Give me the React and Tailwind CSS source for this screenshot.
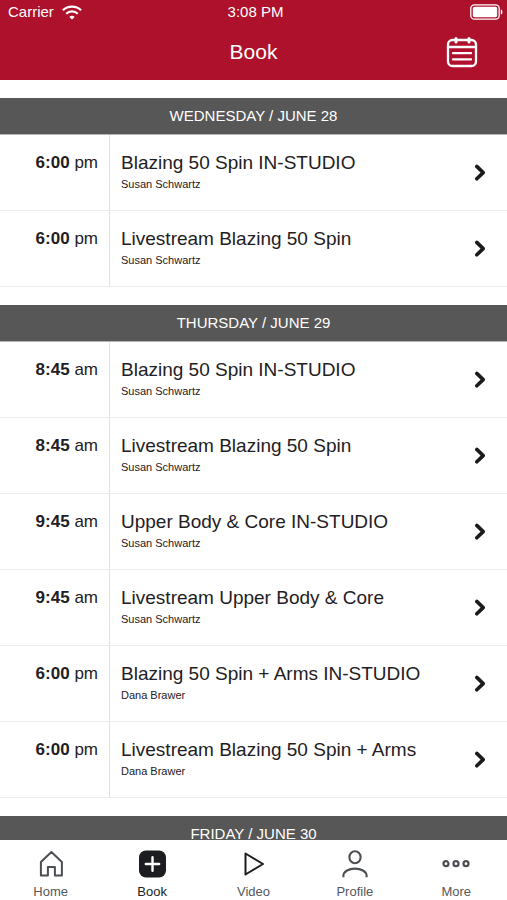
import React, { useState } from "react";

const schedule = [
  {
    day: "WEDNESDAY / JUNE 28",
    classes: [
      { time: "6:00", period: "pm", name: "Blazing 50 Spin IN-STUDIO", teacher: "Susan Schwartz" },
      { time: "6:00", period: "pm", name: "Livestream Blazing 50 Spin", teacher: "Susan Schwartz" },
    ],
  },
  {
    day: "THURSDAY / JUNE 29",
    classes: [
      { time: "8:45", period: "am", name: "Blazing 50 Spin IN-STUDIO", teacher: "Susan Schwartz" },
      { time: "8:45", period: "am", name: "Livestream Blazing 50 Spin", teacher: "Susan Schwartz" },
      { time: "9:45", period: "am", name: "Upper Body & Core IN-STUDIO", teacher: "Susan Schwartz" },
      { time: "9:45", period: "am", name: "Livestream Upper Body & Core", teacher: "Susan Schwartz" },
      { time: "6:00", period: "pm", name: "Blazing 50 Spin + Arms IN-STUDIO", teacher: "Dana Brawer" },
      { time: "6:00", period: "pm", name: "Livestream Blazing 50 Spin + Arms", teacher: "Dana Brawer" },
    ],
  },
  { day: "FRIDAY / JUNE 30", classes: [] },
];

const WifiIcon = () => (
  <svg width="20" height="15" viewBox="0 0 20 15" fill="none" stroke="white" strokeWidth="2.2">
    <path d="M0.9 5.2C6 0.4 14 0.4 19.1 5.2" />
    <path d="M4.2 8.7C7.4 5.7 12.6 5.7 15.8 8.7" />
    <path d="M10 14.6L7.3 11.9C8.8 10.5 11.2 10.5 12.7 11.9Z" fill="white" stroke="none" />
  </svg>
);

const BatteryIcon = () => (
  <svg width="33" height="16" viewBox="0 0 33 16" fill="none">
    <rect x="0.8" y="0.8" width="28.4" height="14.4" rx="3.6" stroke="white" strokeWidth="1.3" />
    <rect x="2.8" y="2.8" width="24.4" height="10.4" rx="1.8" fill="white" />
    <path d="M30.8 5.2C33 6.2 33 9.8 30.8 10.8Z" fill="white" />
  </svg>
);

const CalendarIcon = () => (
  <svg width="32" height="32" viewBox="0 0 32 32" fill="none" stroke="white" strokeWidth="2.3" strokeLinecap="round">
    <rect x="2" y="4" width="28" height="26" rx="4.5" />
    <path d="M2 11H30" />
    <path d="M10 2.5V6M23 2.5V6" strokeWidth="3" />
    <path d="M7 17.2H25M7 23.4H25" />
  </svg>
);

const ChevronIcon = () => (
  <svg width="12" height="18" viewBox="0 0 12 18" fill="none" stroke="#1b1b1d" strokeWidth="3.6" strokeLinecap="round" strokeLinejoin="round">
    <path d="M2.8 2.4L9.2 8.6L2.8 14.8" />
  </svg>
);

const HomeIcon = () => (
  <svg width="28" height="28" viewBox="0 0 28 28" fill="none" stroke="#4b4e53" strokeWidth="2" strokeLinejoin="round">
    <path d="M3.9 12L14.4 2L24.9 12V25.5H17.9V17H10.9V25.5H3.9Z" />
  </svg>
);

const BookIcon = () => (
  <svg width="28" height="28" viewBox="0 0 28 28" fill="none">
    <rect x="1" y="0.5" width="27" height="27" rx="7" fill="#1c1d21" />
    <path d="M14.5 7.3V20.7M7.8 14H21.2" stroke="white" strokeWidth="2.4" strokeLinecap="round" />
  </svg>
);

const VideoIcon = () => (
  <svg width="28" height="28" viewBox="0 0 28 28" fill="none" stroke="#1c1d21" strokeWidth="2" strokeLinejoin="round">
    <path d="M6.5 3.5L24 14L6.5 24.5Z" />
  </svg>
);

const ProfileIcon = () => (
  <svg width="28" height="28" viewBox="0 0 28 28" fill="none" stroke="#4b4e53" strokeWidth="2.1">
    <ellipse cx="14" cy="7.3" rx="5.6" ry="6" />
    <path d="M2.4 27.2V26C2.4 16.2 25.6 16.2 25.6 26V27.2" />
  </svg>
);

const MoreIcon = () => (
  <svg width="28" height="28" viewBox="0 0 28 28" fill="none" stroke="#4b4e53" strokeWidth="2.2">
    <circle cx="4" cy="13.7" r="2.5" />
    <circle cx="14" cy="13.7" r="2.5" />
    <circle cx="24" cy="13.7" r="2.5" />
  </svg>
);

const tabs = [
  { name: "Home", Icon: HomeIcon },
  { name: "Book", Icon: BookIcon },
  { name: "Video", Icon: VideoIcon },
  { name: "Profile", Icon: ProfileIcon },
  { name: "More", Icon: MoreIcon },
];

const ClassRow = ({ item }) => (
  <li>
    <button className="flex h-[76px] w-full border-b border-[#e9ebec] text-left text-[#1f2023]">
      <span className="w-[110px] shrink-0 self-stretch border-r border-[#dfe2e4] pt-4 pr-[11px] text-right text-[17px] leading-6">
        <b>{item.time}</b> {item.period}
      </span>
      <span className="flex min-w-0 flex-1 flex-col pt-4 pl-[11px]">
        <span className="text-[19px] leading-6">{item.name}</span>
        <span className="text-[11px] leading-[18px]">{item.teacher}</span>
      </span>
      <span className="self-center pr-[21px]">
        <ChevronIcon />
      </span>
    </button>
  </li>
);

const App = () => {
  const [activeTab, setActiveTab] = useState("Book");

  return (
    <div className="flex h-screen flex-col bg-white font-['Liberation_Sans',Arial,sans-serif]">
      <header className="shrink-0 bg-[#ae112b] text-white">
        <div className="grid h-6 grid-cols-3 items-center pr-1 pl-2 text-[15px]">
          <span className="flex items-center gap-2">
            Carrier <WifiIcon />
          </span>
          <span className="text-center">3:08 PM</span>
          <span className="flex justify-end">
            <BatteryIcon />
          </span>
        </div>
        <div className="grid h-14 grid-cols-3 items-center">
          <h1 className="col-start-2 text-center text-[21px]">Book</h1>
          <button aria-label="Calendar" className="mr-[29px] justify-self-end">
            <CalendarIcon />
          </button>
        </div>
      </header>

      <main className="flex min-h-0 flex-1 flex-col gap-[18px] overflow-y-auto pt-[18px] [scrollbar-width:none]">
        {schedule.map((section) => (
          <section key={section.day} className="shrink-0">
            <h2 className="flex h-[37px] items-center justify-center border-b border-[#b5b5b5] bg-[#575757] text-[15px] text-white">
              {section.day}
            </h2>
            <ul>
              {section.classes.map((item, index) => (
                <ClassRow key={index} item={item} />
              ))}
            </ul>
          </section>
        ))}
      </main>

      <nav className="grid h-[60px] shrink-0 grid-cols-5 bg-white">
        {tabs.map(({ name, Icon }) => (
          <button
            key={name}
            onClick={() => setActiveTab(name)}
            className={`flex flex-col items-center gap-1 pt-[10px] text-[13px] leading-5 ${
              activeTab === name ? "text-[#1c1d21]" : "text-[#55585d]"
            }`}
          >
            <Icon />
            {name}
          </button>
        ))}
      </nav>
    </div>
  );
};

export default App;
